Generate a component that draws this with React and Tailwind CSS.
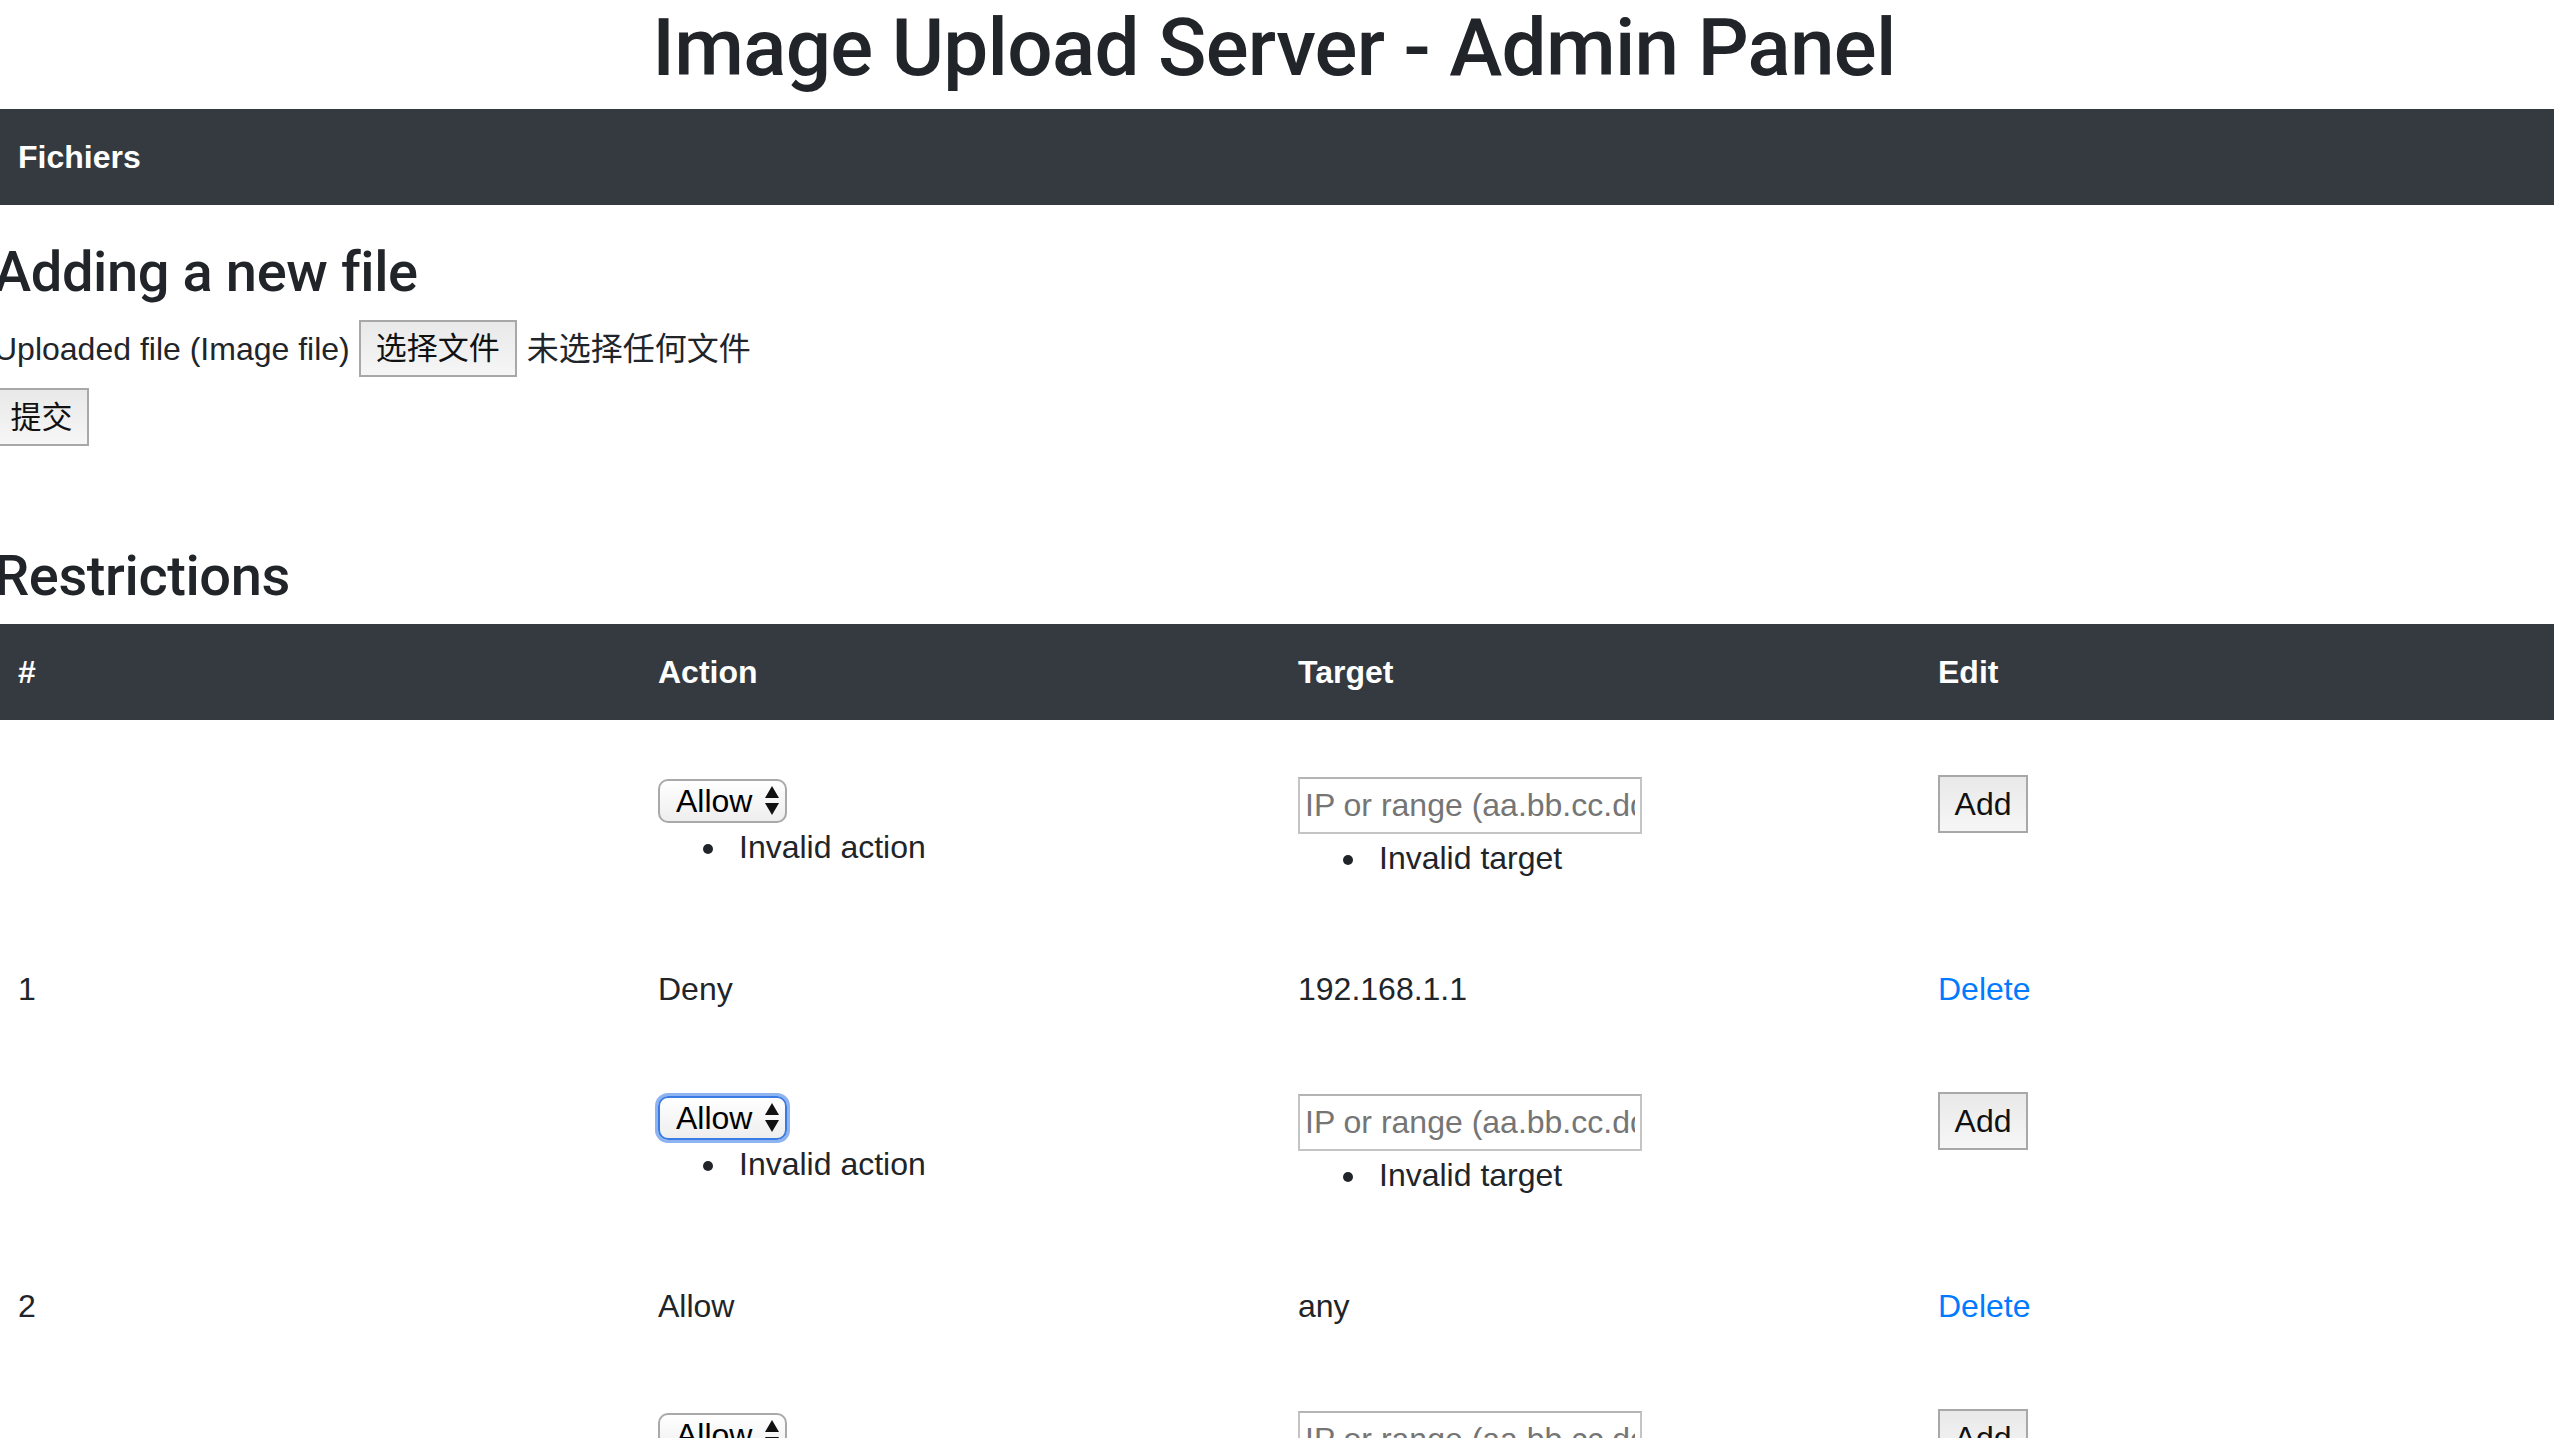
import React from "react";

function SelectBox({ focused }) {
  return (
    <div
      className={
        focused
          ? "w-[129px] h-[44px] rounded-[10px] border-2 border-[#3a7be3] shadow-[0_0_0_3px_#8db4f0] bg-linear-to-b from-[#ffffff] to-[#eeeeee] flex items-center justify-between pl-[16px] pr-[5px] text-[32px] leading-none text-black"
          : "w-[129px] h-[44px] rounded-[10px] border-2 border-[#a9a9a9] bg-linear-to-b from-[#ffffff] to-[#eeeeee] flex items-center justify-between pl-[16px] pr-[5px] text-[32px] leading-none text-black"
      }
    >
      <span>Allow</span>
      <svg width="16" height="30" viewBox="0 0 16 30" className="shrink-0">
        <polygon points="8,0 15,12 1,12" fill="#111" />
        <polygon points="1,17 15,17 8,29" fill="#111" />
      </svg>
    </div>
  );
}

function GrayButton({ children, className }) {
  return (
    <button
      type="button"
      className={
        "border-2 border-[#a8a8a8] bg-linear-to-b from-[#e9e9e9] to-[#f6f6f6] text-[#111] leading-none flex items-center justify-center " +
        className
      }
    >
      {children}
    </button>
  );
}

function ErrorItem({ children }) {
  return (
    <ul className="pl-[45px] mt-0">
      <li className="flex items-center h-[48px] text-[32px] leading-[48px]">
        <span className="w-[10px] h-[10px] rounded-full bg-[#212529] mt-[4px] mr-[26px] shrink-0" />
        <span>{children}</span>
      </li>
    </ul>
  );
}

function FormRow({ focused }) {
  return (
    <div className="grid grid-cols-4 h-[221px] text-[32px] leading-[48px]">
      <div className="px-[24px]" />
      <div className="px-[24px] pt-[59px]">
        <SelectBox focused={focused} />
        <ErrorItem>Invalid action</ErrorItem>
      </div>
      <div className="px-[24px] pt-[57px]">
        <input
          readOnly
          placeholder="IP or range (aa.bb.cc.dd/xx)"
          className="block w-[344px] h-[57px] border-2 border-[#c4c4c4] border-t-[#b4b4b4] px-[5px] text-[32px] placeholder:text-[#757575] outline-none bg-white"
        />
        <ErrorItem>Invalid target</ErrorItem>
      </div>
      <div className="px-[24px] pt-[55px]">
        <GrayButton className="w-[90px] h-[58px] text-[32px]">Add</GrayButton>
      </div>
    </div>
  );
}

function DataRow({ id, action, target }) {
  return (
    <div className="grid grid-cols-4 h-[96px] text-[32px] leading-[48px]">
      <div className="px-[24px] py-[24px]">{id}</div>
      <div className="px-[24px] py-[24px]">{action}</div>
      <div className="px-[24px] py-[24px]">{target}</div>
      <div className="px-[24px] py-[24px]">
        <a className="text-[#007bff] cursor-pointer">Delete</a>
      </div>
    </div>
  );
}

export default function App() {
  return (
    <div className="h-[1438px] w-[2554px] overflow-hidden bg-white text-[#212529] font-['Liberation_Sans','Noto_Sans_CJK_SC',sans-serif]">
      <div className="ml-[-6px] w-[2560px]">
        <h1 className="text-center font-['Roboto',sans-serif] font-medium text-[80px] leading-[96px] tracking-[-0.7px] mb-[13px]">
          Image Upload Server - Admin Panel
        </h1>
        <nav className="h-[96px] bg-[#343a40] flex items-center pl-[24px]">
          <span className="text-white font-bold text-[32px] leading-[48px]">Fichiers</span>
        </nav>

        <h3 className="mt-[34px] font-['Roboto',sans-serif] font-medium text-[56px] leading-[67px] tracking-[-0.4px]">
          Adding a new file
        </h3>
        <div className="mt-[14px] h-[57px] flex items-center text-[32px] leading-[48px]">
          <span>Uploaded file (Image file)</span>
          <GrayButton className="ml-[9px] w-[158px] h-[57px] text-[31px]">选择文件</GrayButton>
          <span className="ml-[10px] text-[32px]">未选择任何文件</span>
        </div>
        <div className="mt-[11px]">
          <GrayButton className="w-[95px] h-[58px] text-[31px]">提交</GrayButton>
        </div>

        <h3 className="mt-[97px] font-['Roboto',sans-serif] font-medium text-[56px] leading-[67px] tracking-[-0.4px]">
          Restrictions
        </h3>

        <div className="mt-[14px]">
          <div className="grid grid-cols-4 h-[96px] bg-[#343a40] text-white font-bold text-[32px] leading-[48px]">
            <div className="px-[24px] py-[24px]">#</div>
            <div className="px-[24px] py-[24px]">Action</div>
            <div className="px-[24px] py-[24px]">Target</div>
            <div className="px-[24px] py-[24px]">Edit</div>
          </div>
          <FormRow />
          <DataRow id="1" action="Deny" target="192.168.1.1" />
          <FormRow focused />
          <DataRow id="2" action="Allow" target="any" />
          <FormRow />
        </div>
      </div>
    </div>
  );
}
